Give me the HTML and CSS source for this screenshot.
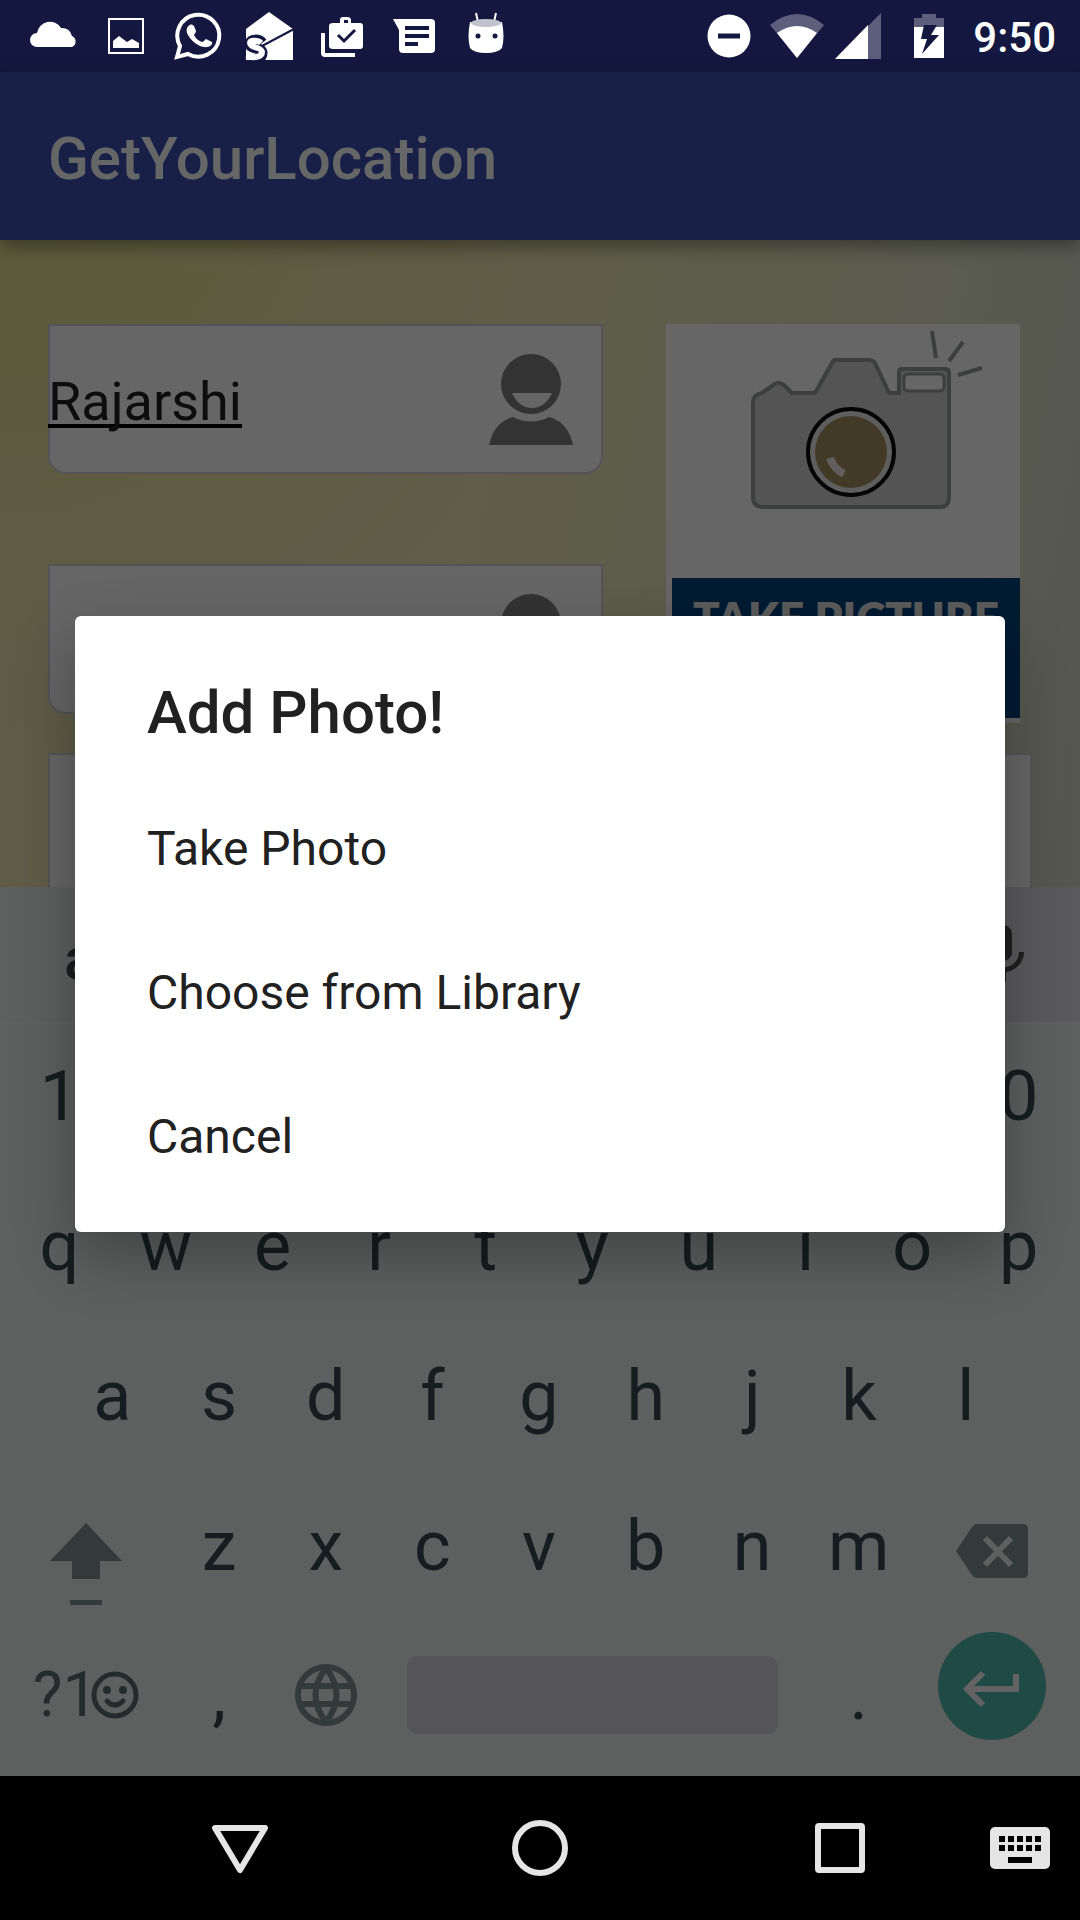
FILE: index.html
```html
<!DOCTYPE html>
<html lang="en">
<head>
<meta charset="utf-8">
<meta name="viewport" content="width=device-width, initial-scale=1">
<title>GetYourLocation</title>
<link rel="stylesheet" href="styles.css">
</head>
<body>
<header class="status">
  <div class="status-notes">
    <svg class="note" viewBox="0 0 72 72" aria-hidden="true"><path fill="#fff" d="M19 47a7 7 0 0 1 0-14 13 13 0 0 1 24-5 10 10 0 0 1 11 8 6 6 0 0 1 0 11z"/></svg>
    <svg class="note" viewBox="0 0 72 72" aria-hidden="true"><path fill="none" stroke="#fff" stroke-width="2" d="M19 19h34v34H19z"/><path fill="#fff" d="M23 48v-7l6-5 8 6 5-3 7 4v5z"/></svg>
    <svg class="note" viewBox="0 0 72 72" aria-hidden="true"><path fill="none" stroke="#fff" stroke-width="4" d="M15 57l3-11a21 21 0 1 1 8 8z"/><path fill="#fff" d="M28 25c1-1 3 0 4 1l2 5c0 2-2 3-2 4 2 4 5 6 8 7 2 0 3-3 4-3l6 3c1 1-1 4-2 4-3 2-7 1-10 0-6-3-11-8-13-13-1-3 0-7 3-8z"/></svg>
    <svg class="note" viewBox="0 0 72 72" aria-hidden="true"><path fill="#fff" d="M12 29l23-17 24 17v31H12z"/><path stroke="#141840" stroke-width="2" d="M60 29L28 46"/><path fill="none" stroke="#141840" stroke-width="11" d="M28 43c-3-4-12-4-12 1 0 5 12 3 12 9 0 6-7 7-9 7"/><path fill="none" stroke="#fff" stroke-width="6" d="M27 43c-3-3-11-3-11 0 0 5 12 4 12 9 0 5-9 7-15 3"/></svg>
    <svg class="note" viewBox="0 0 72 72" aria-hidden="true"><path fill="#fff" fill-rule="evenodd" d="M27 23h7v-3q0-3 3-3h4q4 0 4 3v3h9q3 0 3 3v20q0 3-3 3H27q-4 0-4-3V26q0-3 4-3zm11-3v3h4v-3z"/><path fill="none" stroke="#fff" stroke-width="4" d="M17 33v20q0 2 2 2h30"/><path fill="none" stroke="#141840" stroke-width="3" d="M32 35l6 6 11-11"/></svg>
    <svg class="note" viewBox="0 0 72 72" aria-hidden="true"><path fill="#fff" d="M15 19h38q4 0 4 4v26q0 4-4 4H25q-4 0-4-4V30z"/><path stroke="#141840" stroke-width="4" d="M27 28h24M27 36h24M27 44h13"/></svg>
    <svg class="note" viewBox="0 0 72 72" aria-hidden="true"><path stroke="#fff" stroke-width="2" d="M26 13l2 9M46 13l-2 9"/><path fill="#fff" d="M20 22h32q3 15 0 26-4 5-16 5t-16-5q-3-11 0-26z"/><ellipse cx="36" cy="23" rx="15" ry="4" fill="#c1c2ce"/><circle cx="28" cy="36" r="2.500" fill="#141840"/><circle cx="45" cy="36" r="2.500" fill="#141840"/></svg>
  </div>
  <div class="status-system">
    <svg class="dnd" viewBox="0 0 44 44" aria-hidden="true"><circle cx="22" cy="22" r="21.500" fill="#fff"/><path stroke="#141840" stroke-width="5" d="M11 22h22"/></svg>
    <svg class="wifi" viewBox="0 0 54 44" aria-hidden="true"><path fill="#5c5f7c" d="M0 11Q27-11 54 11L27 44z"/><path fill="#fff" d="M7 19q20-14 40 0L27 44z"/></svg>
    <svg class="signal" viewBox="0 0 46 46" aria-hidden="true"><path fill="#5c5f7c" d="M0 46L46 0v46z"/><path fill="#fff" d="M0 46l33-34v34z"/></svg>
    <svg class="battery" viewBox="0 0 30 44" aria-hidden="true"><path fill="#5c5f7c" d="M0 4h8V0h14v4h8v10H0z"/><path fill="#fff" d="M0 13h30v31H0z"/><path fill="#141840" d="M10 11h13l-6 10h8L8 40l5-15H7z"/></svg>
    <time class="clock" datetime="21:50">9:50</time>
  </div>
</header>

<div class="stage">
  <main class="app">
    <div class="app-bar"><h1 class="app-title">GetYourLocation</h1></div>
    <form class="form">
      <div class="form-top">
        <div class="names">
          <div class="field">
            <input class="field-input" type="text" value="Rajarshi" aria-label="First name">
            <svg class="person" viewBox="0 0 84 92" aria-hidden="true"><circle cx="42" cy="31" r="30" fill="#808080"/><path fill="#fff" d="M23 40h40q-7 15-20 15T23 40z"/><path fill="#808080" d="M0 92q5-23 24-28 18 9 36 0 19 5 24 28z"/></svg>
          </div>
          <div class="field">
            <input class="field-input" type="text" aria-label="Last name">
            <svg class="person" viewBox="0 0 84 92" aria-hidden="true"><circle cx="42" cy="31" r="30" fill="#808080"/><path fill="#fff" d="M23 40h40q-7 15-20 15T23 40z"/><path fill="#808080" d="M0 92q5-23 24-28 18 9 36 0 19 5 24 28z"/></svg>
          </div>
        </div>
        <button class="picture" type="button">
          <svg class="camera" viewBox="0 0 354 254" aria-hidden="true">
            <path fill="#d2d3d3" stroke="#999b9b" stroke-width="4" stroke-linejoin="round" d="M87 78q0-7 9-9l3-2 7-5q6-6 12-1l8 8h23l17-30q1-3 4-3h33q5 0 7 5l13 28h10V48q0-3 3-3h43q4 0 4 4v124q0 10-9 10H97q-10 0-10-10z"/>
            <rect x="238" y="50" width="40" height="17" rx="4" fill="#fff" stroke="#999b9b" stroke-width="3"/>
            <path stroke="#999b9b" stroke-width="4" d="M266 7l4 27M297 18l-14 19M316 44l-24 7"/>
            <circle cx="185" cy="128" r="43" fill="#ececec" stroke="#0a0a0a" stroke-width="4"/>
            <circle cx="185" cy="128" r="36" fill="#a78e62"/>
            <path fill="none" stroke="#f0eee8" stroke-width="8" d="M164 134q4 11 14 16"/>
          </svg>
          <span class="banner">TAKE PICTURE</span>
        </button>
      </div>
      <textarea class="notes" aria-label="Details"></textarea>
    </form>
  </main>

  <section class="keyboard" aria-label="Keyboard">
    <div class="strip">
      <button class="suggestion">a</button>
      <button class="mic" aria-label="Voice input"><svg class="mic-icon" viewBox="0 0 24 24" aria-hidden="true"><path fill="#50524e" d="M12 14c1.660 0 3-1.340 3-3V5c0-1.660-1.340-3-3-3S9 3.340 9 5v6c0 1.660 1.340 3 3 3zm5.300-3c0 3-2.540 5.100-5.300 5.100S6.700 14 6.700 11H5c0 3.410 2.720 6.230 6 6.720V21h2v-3.280c3.280-.480 6-3.300 6-6.720z"/></svg></button>
    </div>
    <div class="keys">
      <button class="key">1</button>
      <button class="key" aria-label="2"></button>
      <button class="key" aria-label="3"></button>
      <button class="key" aria-label="4"></button>
      <button class="key" aria-label="5"></button>
      <button class="key" aria-label="6"></button>
      <button class="key" aria-label="7"></button>
      <button class="key" aria-label="8"></button>
      <button class="key" aria-label="9"></button>
      <button class="key">0</button>
    </div>
    <div class="keys">
      <button class="key">q</button><button class="key">w</button><button class="key">e</button><button class="key">r</button><button class="key">t</button><button class="key">y</button><button class="key">u</button><button class="key">i</button><button class="key">o</button><button class="key">p</button>
    </div>
    <div class="keys keys-home">
      <button class="key">a</button><button class="key">s</button><button class="key">d</button><button class="key">f</button><button class="key">g</button><button class="key">h</button><button class="key">j</button><button class="key">k</button><button class="key">l</button>
    </div>
    <div class="keys keys-shift">
      <button class="key" aria-label="Shift"><svg class="key-icon" viewBox="0 0 72 120" aria-hidden="true"><path fill="#82918e" d="M36 37l36 38H50v18H22V75H0zM20 114h32v5H20z"/></svg></button>
      <button class="key">z</button><button class="key">x</button><button class="key">c</button><button class="key">v</button><button class="key">b</button><button class="key">n</button><button class="key">m</button>
      <button class="key" aria-label="Backspace"><svg class="key-icon" viewBox="0 0 72 120" aria-hidden="true"><path fill="#82918e" d="M0 65l16-24q2-3 5-3h46q5 0 5 5v44q0 5-5 5H21q-3 0-5-3z"/><path stroke="#ebefee" stroke-width="6" d="M29 52l26 27M55 52L29 79"/></svg></button>
    </div>
    <div class="keys keys-bottom">
      <button class="key key-symbols">?1<svg class="smiley" viewBox="0 0 48 48" aria-hidden="true"><circle cx="24" cy="24" r="21" fill="none" stroke="#5c6b70" stroke-width="5"/><circle cx="16" cy="19" r="4" fill="#5c6b70"/><circle cx="32" cy="19" r="4" fill="#5c6b70"/><path fill="none" stroke="#5c6b70" stroke-width="5" stroke-linecap="round" d="M16 30q8 8 16 0"/></svg></button>
      <button class="key">,</button>
      <button class="key" aria-label="Change language"><svg class="globe" viewBox="0 0 62 62" aria-hidden="true"><g fill="none" stroke="#82918e" stroke-width="6"><circle cx="31" cy="31" r="28"/><path d="M31 4q-21 27 0 54M31 4q21 27 0 54M5 22h52M5 40h52"/></g></svg></button>
      <button class="space" aria-label="Space"></button>
      <button class="key">.</button>
      <button class="enter" aria-label="Enter"><svg class="enter-icon" viewBox="0 0 108 108" aria-hidden="true"><path fill="none" stroke="#f8f8f8" stroke-width="6" d="M78 42v15H28M45 41L29 57l16 16"/></svg></button>
    </div>
  </section>

  <div class="scrim">
    <div class="dialog" role="dialog" aria-modal="true" aria-labelledby="dialog-title">
      <h2 class="dialog-title" id="dialog-title">Add Photo!</h2>
      <button class="option">Take Photo</button>
      <button class="option">Choose from Library</button>
      <button class="option">Cancel</button>
    </div>
  </div>
</div>

<nav class="nav">
  <button class="nav-button" aria-label="Back"><svg class="nav-icon" viewBox="0 0 60 60" aria-hidden="true"><path fill="none" stroke="#e5e5e5" stroke-width="6" stroke-linejoin="round" d="M5 10h50L30 52z"/></svg></button>
  <button class="nav-button" aria-label="Home"><svg class="nav-icon" viewBox="0 0 60 60" aria-hidden="true"><circle cx="30" cy="30" r="25" fill="none" stroke="#e5e5e5" stroke-width="6"/></svg></button>
  <button class="nav-button" aria-label="Recent apps"><svg class="nav-icon" viewBox="0 0 60 60" aria-hidden="true"><rect x="8" y="8" width="44" height="44" rx="1" fill="none" stroke="#e5e5e5" stroke-width="6"/></svg></button>
  <button class="nav-button" aria-label="Choose keyboard"><svg class="nav-icon" viewBox="0 0 60 60" aria-hidden="true"><rect y="9" width="60" height="42" rx="5" fill="#e5e5e5"/><path stroke="#000" stroke-width="6" stroke-dasharray="6 3" d="M9 21h42M9 30h42"/><path stroke="#000" stroke-width="6" d="M18 42h24"/></svg></button>
</nav>
</body>
</html>
```
FILE: styles.css
```css
* { box-sizing: border-box; }

body {
  margin: 0;
  min-height: 100vh;
  display: flex;
  flex-direction: column;
  background: #000;
  font-family: Roboto, "Noto Sans", sans-serif;
}

button {
  margin: 0;
  padding: 0;
  border: 0;
  background: none;
  color: inherit;
  font: inherit;
}

svg { display: block; flex-shrink: 0; }
h1, h2 { margin: 0; font-weight: 500; }

/* Status bar */
.status {
  display: flex;
  align-items: center;
  justify-content: space-between;
  height: 72px;
  padding: 0 24px 0 18px;
  background: #141840;
  color: #fff;
}
.status-notes, .status-system { display: flex; align-items: center; }
.note { width: 72px; height: 72px; }
.dnd { width: 44px; height: 44px; margin-right: 19px; }
.wifi { width: 54px; height: 44px; margin-right: 11px; }
.signal { width: 46px; height: 46px; margin-right: 33px; }
.battery { width: 30px; height: 44px; margin-right: 29px; }
.clock { padding-top: 3px; font-size: 42px; line-height: 48px; font-weight: 500; }

/* App screen and keyboard, both dimmed by the scrim */
.stage {
  position: relative;
  flex: 1;
  display: flex;
  flex-direction: column;
}
.app {
  flex: 1;
  display: flex;
  flex-direction: column;
  background:
    radial-gradient(circle at 0 12%, rgba(226, 226, 135, .8), transparent 45%),
    linear-gradient(100deg, #ece6b4 0%, #efe8b4 45%, #e3e6c6 80%, #d3d6c4 100%);
}
.app-bar {
  height: 168px;
  padding: 52px 48px 0;
  background: #3f51b5;
  box-shadow: 0 6px 18px rgba(0, 0, 0, .4);
}
.app-title { font-size: 60px; line-height: 70px; color: #fff; }
.form {
  flex: 1;
  display: flex;
  flex-direction: column;
  gap: 30px;
  padding: 84px 48px 0;
}
.form-top {
  display: flex;
  align-items: flex-start;
  gap: 63px;
  padding-right: 12px;
}
.names {
  flex: 1;
  min-width: 0;
  display: flex;
  flex-direction: column;
  gap: 90px;
}
.field {
  display: flex;
  align-items: center;
  height: 150px;
  padding-right: 30px;
  border-radius: 0 0 18px 18px;
  background: #fff;
  box-shadow: inset 0 0 0 2px #d3d3db;
}
.field-input {
  flex: 1;
  min-width: 0;
  height: 100%;
  padding: 4px 0 0;
  border: 0;
  outline: 0;
  background: none;
  color: #212121;
  font: 54px/64px Roboto, "Noto Sans", sans-serif;
  text-decoration: underline 4px #000;
  text-underline-offset: 4px;
  text-decoration-skip-ink: none;
}
.person { width: 84px; height: 92px; }
.picture {
  flex: none;
  width: 354px;
  padding-bottom: 5px;
  background: #fff;
}
.camera { width: 354px; height: 254px; }
.banner {
  display: block;
  height: 140px;
  margin-left: 6px;
  padding-top: 14px;
  background: #004480;
  color: #e6e6e6;
  font: 800 44px/50px Lato, sans-serif;
}
.notes {
  flex: 1;
  min-height: 120px;
  width: 100%;
  border: 2px solid #d3d3db;
  border-bottom: 0;
  resize: none;
  background: #fff;
}

/* Keyboard */
.keyboard {
  padding-bottom: 8px;
  background: #ebefee;
  color: #37474f;
  font-size: 70px;
}
.strip {
  display: flex;
  align-items: center;
  justify-content: space-between;
  height: 137px;
  margin-bottom: -3px;
  padding: 0 41px 0 64px;
  border-bottom: 2px solid #f0f2f2;
  background: linear-gradient(90deg, #ebefee, #e1e1e5);
}
.suggestion { padding-top: 8px; font-size: 60px; font-weight: 500; }
.mic-icon { width: 72px; height: 72px; }
.keys {
  display: grid;
  grid-template-columns: repeat(10, 1fr);
  height: 150px;
  padding: 0 8px 0 6px;
}
.keys-home { grid-template-columns: repeat(9, 1fr); padding: 0 61px 0 59px; }
.keys-shift { grid-template-columns: 3fr repeat(7, 2fr) 3fr; }
.keys-bottom {
  grid-template-columns: 3fr 2fr 2fr 8fr 2fr 3fr;
  align-items: center;
  height: 147px;
}
.key {
  display: flex;
  align-items: center;
  justify-content: center;
  min-width: 0;
}
.key-icon { width: 72px; height: 120px; }
.key-symbols { color: #5c6b70; font-size: 63px; }
.smiley { width: 48px; height: 48px; margin-left: -7px; }
.globe { width: 62px; height: 62px; }
.space {
  height: 78px;
  margin: 0 28px;
  border-radius: 10px;
  background: #d4d5d9;
}
.enter {
  justify-self: center;
  margin-bottom: 18px;
  border-radius: 50%;
  background: #50b9ad;
}
.enter-icon { width: 108px; height: 108px; }

/* Dialog */
.scrim {
  position: absolute;
  inset: 0;
  display: flex;
  align-items: center;
  justify-content: center;
  padding: 0 75px;
  background: rgba(0, 0, 0, .6);
}
.dialog {
  flex: 1;
  display: flex;
  flex-direction: column;
  padding: 54px 0 24px;
  border-radius: 6px;
  background: #fff;
  color: #212121;
  box-shadow: 0 24px 60px rgba(0, 0, 0, .3);
}
.dialog-title {
  padding: 0 72px;
  margin-bottom: 20px;
  font-size: 60px;
  line-height: 86px;
}
.option {
  height: 144px;
  padding: 0 72px;
  font-size: 48px;
  text-align: left;
}

/* Navigation bar */
.nav {
  display: grid;
  grid-template-columns: 1fr 1fr 1fr 60px;
  height: 144px;
  padding: 0 30px 0 90px;
}
.nav-button {
  display: flex;
  align-items: center;
  justify-content: center;
}
.nav-icon { width: 60px; height: 60px; }
```
